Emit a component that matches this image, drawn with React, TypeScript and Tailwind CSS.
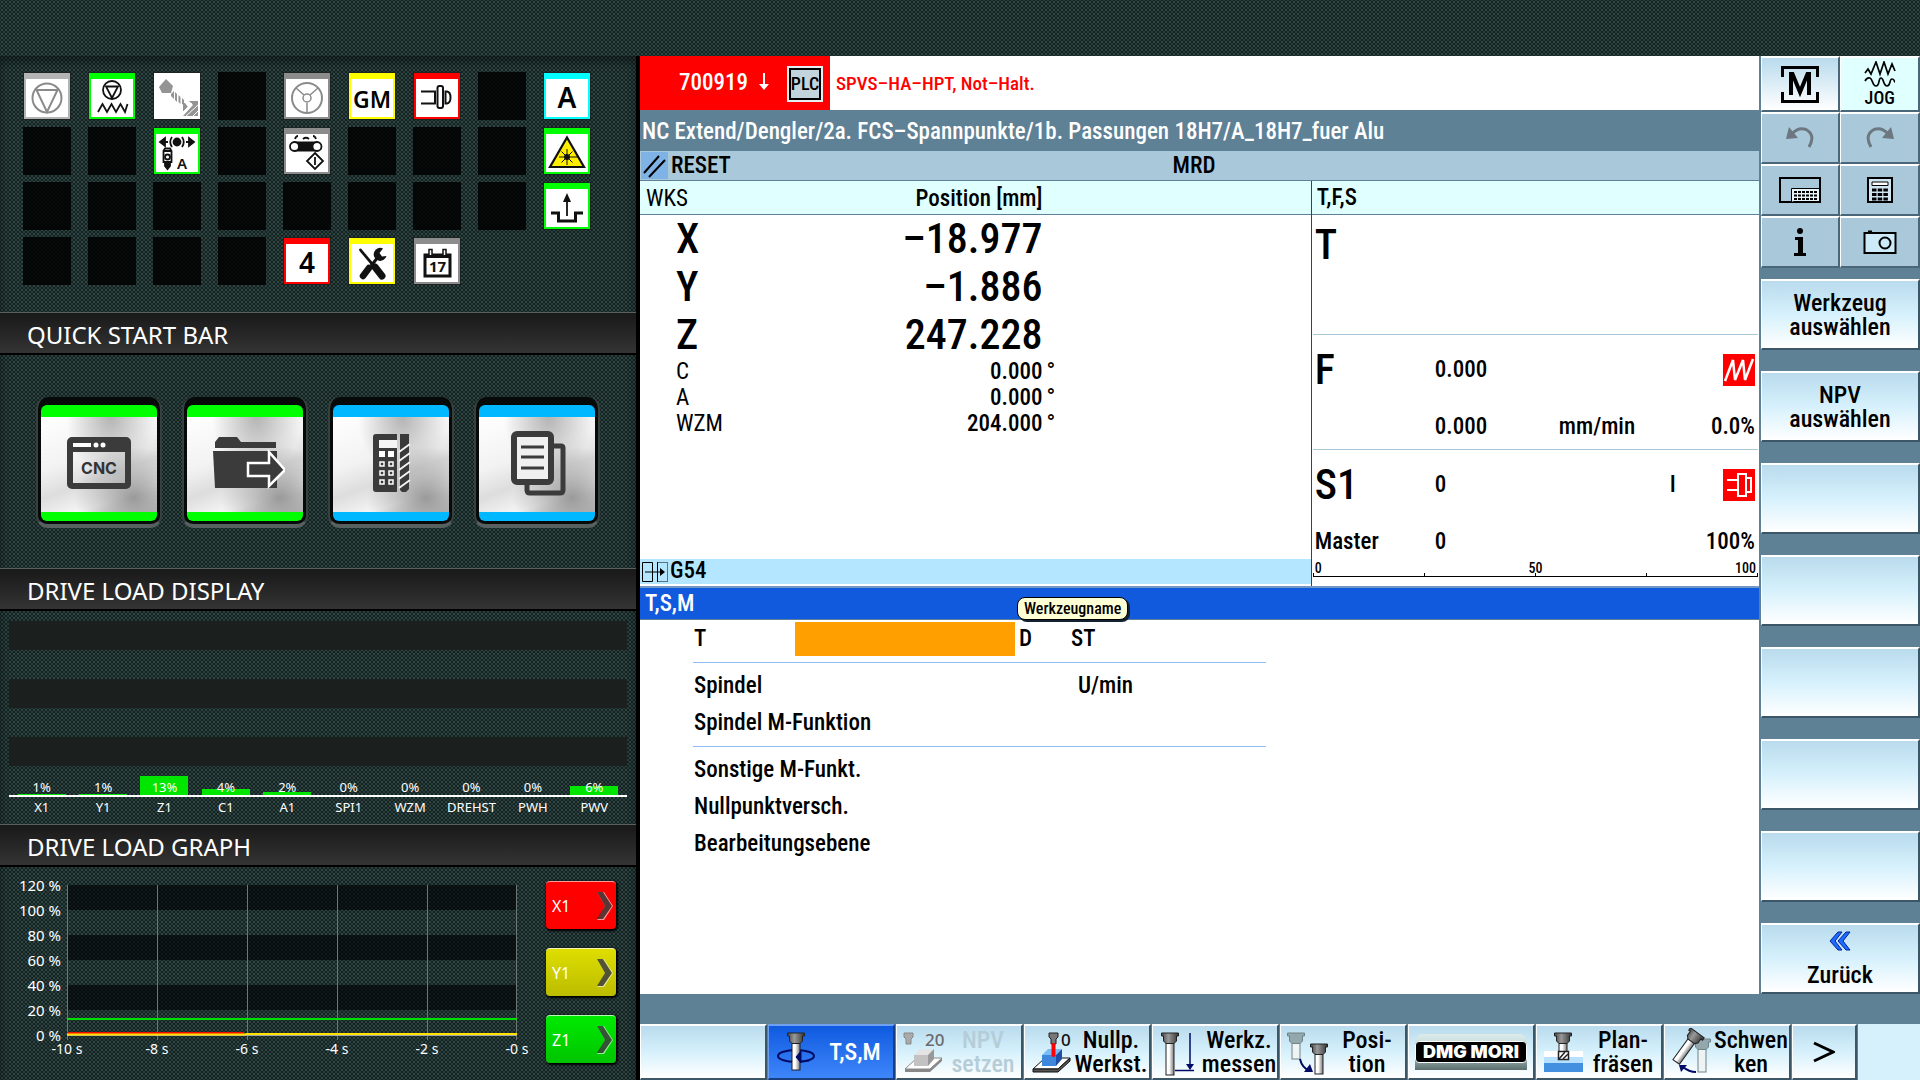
import type { ReactNode } from 'react';

const TEXTURE =
  'bg-[#142322] bg-[radial-gradient(circle,#2f4644_0_1px,transparent_1px),radial-gradient(circle,#293d3b_0_1px,transparent_1px)] bg-[size:4px_4px] bg-[position:0_0,2px_2px]';

/* ---------- status tiles ---------- */

type Frame = 'gray' | 'silver' | 'green' | 'yellow' | 'red' | 'cyan' | 'none';

const FRAMES: Record<Frame, string> = {
  gray: 'border-[#8c8c8c]',
  silver: 'border-[#b4b4b4]',
  green: 'border-[#00ff00]',
  yellow: 'border-[#ffff00]',
  red: 'border-[#ff0000]',
  cyan: 'border-[#00ffff]',
  none: 'border-white',
};

function Tile({ frame, label, children }: { frame: Frame; label: string; children: ReactNode }) {
  return (
    <button type="button" aria-label={label} className="size-12 bg-[#1c2423] p-px">
      <span className={`block size-full border-x-2 border-t-6 border-b-2 bg-white ${FRAMES[frame]}`}>
        <svg viewBox="0 0 42 38" className="size-full overflow-visible" fill="none" stroke="#111" strokeWidth="1.8">
          {children}
        </svg>
      </span>
    </button>
  );
}

function TileText({ children }: { children: string }) {
  return (
    <text x="21" y="29" textAnchor="middle" fontSize={children.length > 1 ? 23 : 28} fontWeight="600" fill="#000" stroke="none" className="font-['Noto_Sans',sans-serif]">
      {children}
    </text>
  );
}

const Blank = () => <div className="size-12 bg-black/85" />;

function StatusTiles() {
  return (
    <div className="grid grid-cols-[repeat(9,48px)] gap-x-[17px] gap-y-[7px] px-[23px] pt-4 pb-[27px]">
      <Tile frame="silver" label="Pumpe">
        <g stroke="#8a8a8a" strokeWidth="2">
          <circle cx="21" cy="19" r="14.500" />
          <path d="M10.500 11H31.500L21 33Z" />
        </g>
      </Tile>
      <Tile frame="green" label="Pumpe Vorschub">
        <circle cx="21" cy="11" r="9" />
        <path d="M15 7.500H27L21 19ZM7 33L11.500 25L16 33L20.500 25L25 33L29.500 25L34 33L36.500 25" />
      </Tile>
      <Tile frame="none" label="Späneförderung">
        <g fill="#949494" stroke="none">
          <path d="M10 0L17 7L15 14L6 14L3 8Z" />
          <path d="M15 15l3-3v8l-3-3zM19 13l2 2v8l-2-2zM22.500 16l2 2v7l-2-2zM26 19l2 2v5l-2-1z" />
          <path d="M40 22H33L37 26L27 37H42V22ZM27 24v9l5-5-3-4z" />
        </g>
        <path d="M29 38L42 26M26 34L36 24M35 39L42 32" stroke="#fff" strokeWidth="1" />
      </Tile>
      <Blank />
      <Tile frame="gray" label="Handrad">
        <g stroke="#8a8a8a" strokeWidth="2">
          <circle cx="21" cy="19" r="15" />
          <circle cx="21" cy="19" r="4" strokeWidth="1.500" />
          <path d="M18 16L10 9M24 16L32 9M21 24V34" strokeWidth="1.500" />
        </g>
      </Tile>
      <Tile frame="yellow" label="GM">
        <TileText>GM</TileText>
      </Tile>
      <Tile frame="red" label="Spindel gesperrt">
        <path d="M5 12.500H19V24.500H5" strokeWidth="2" />
        <rect x="21.500" y="7" width="5.500" height="22" rx="2" strokeWidth="2" />
        <path d="M29.500 12.500H31Q34.500 13 34.500 18.500T31 24.500H29.500Z" strokeWidth="2" />
      </Tile>
      <Blank />
      <Tile frame="cyan" label="Automatik">
        <TileText>A</TileText>
      </Tile>

      <Blank />
      <Blank />
      <Tile frame="green" label="Messtaster Automatik">
        <g fill="#111">
          <path d="M4 8L9 4V12ZM9 8H12M38 8L33 4V12ZM33 8H30" />
          <circle cx="21" cy="8" r="3.500" />
        </g>
        <path d="M16 3Q12.500 8 16 13M26 3Q29.500 8 26 13" strokeWidth="1.800" />
        <path d="M7.500 17L9 14.500H14L15.500 17V28H7.500ZM7.500 17H15.500" />
        <circle cx="11.500" cy="23" r="2.500" />
        <path d="M9 29H14V32L11.500 35L9 32Z" fill="#111" />
        <text x="26" y="35" textAnchor="middle" fontSize="15" fontWeight="600" fill="#111" stroke="none" className="font-['Noto_Sans',sans-serif]">
          A
        </text>
      </Tile>
      <Blank />
      <Tile frame="gray" label="Späneförderer Start">
        <rect x="9" y="7.500" width="22" height="10" fill="#111" stroke="none" />
        <circle cx="8.500" cy="12.500" r="4.500" fill="#fff" />
        <circle cx="31" cy="12.500" r="4.500" fill="#fff" />
        <path d="M9 5Q10 2 12 2M17 5Q20 2.500 23 5M27 2Q29 2 30 5M29 19L37 27L29 35L21 27ZM29 23V31" />
      </Tile>
      <Blank />
      <Blank />
      <Blank />
      <Tile frame="green" label="Laser">
        <path d="M21 3.500L38 33H4Z" fill="#ffee00" strokeWidth="2.200" />
        <circle cx="21" cy="23" r="3" fill="#111" stroke="none" />
        <path d="M21 15V31M13 23H32M15.500 17.500L26.500 28.500M26.500 17.500L15.500 28.500" strokeWidth="1" />
      </Tile>

      <Blank />
      <Blank />
      <Blank />
      <Blank />
      <Blank />
      <Blank />
      <Blank />
      <Blank />
      <Tile frame="green" label="Werkstück entladen">
        <path d="M21 27V10" strokeWidth="1.800" />
        <path d="M21 4L25 13H17Z" fill="#111" stroke="none" />
        <path d="M5 24H12.500V32H29.500V24H37" strokeWidth="3" />
      </Tile>

      <Blank />
      <Blank />
      <Blank />
      <Blank />
      <Tile frame="red" label="4">
        <TileText>4</TileText>
      </Tile>
      <Tile frame="yellow" label="Wartung">
        <path d="M8 5L10 4.500L23 20L21 22L8.500 7Z" fill="#111" stroke="none" />
        <path d="M24 23L31 32" strokeWidth="7" strokeLinecap="round" />
        <path d="M18 24L12 32" strokeWidth="6.500" strokeLinecap="round" />
        <path d="M20 22L27 13" strokeWidth="3" />
        <path d="M32 4.500A6.500 6.500 0 1 0 35.500 12L31 12.500L28.500 9Z" fill="#111" stroke="none" />
      </Tile>
      <Tile frame="gray" label="Kalender">
        <path d="M9 11H34V32H9Z" strokeWidth="3" />
        <path d="M8 10H35V14H8Z" fill="#111" stroke="none" />
        <path d="M13 11V5.500H16V11M27 11V5.500H30V11" fill="#fff" strokeWidth="1.500" />
        <text x="21.500" y="28" textAnchor="middle" fontSize="15" fontWeight="700" fill="#111" stroke="none" className="font-['Noto_Sans',sans-serif]">
          17
        </text>
      </Tile>
    </div>
  );
}

/* ---------- left panel ---------- */

function SectionTitle({ children }: { children: string }) {
  return (
    <h2 className="flex h-[43px] items-center border-t border-b-2 border-t-[#5a5f5f] border-b-black bg-linear-to-b from-[#191919] to-[#343434] px-[27px] pt-[3px] text-2xl text-white">
      {children}
    </h2>
  );
}

function QuickButton({ tone, label, children }: { tone: 'green' | 'blue'; label: string; children: ReactNode }) {
  const strip = tone === 'green' ? 'bg-[#00ff00]' : 'bg-[#00b8ff]';
  return (
    <button
      type="button"
      aria-label={label}
      className="rounded-xl border-x-2 border-b-4 border-x-[#35403f] border-b-[#55605f] bg-black/80 px-[3px] pt-[7px] pb-[3px]"
    >
      <span className="flex h-[116px] w-[116px] flex-col overflow-hidden rounded-md">
        <span className={`h-3 ${strip}`} />
        <span className="flex flex-1 items-center justify-center bg-[radial-gradient(ellipse_at_80%_85%,#9a9a9a_0,transparent_45%),radial-gradient(ellipse_at_60%_0%,#b4b4b4_0,transparent_45%),linear-gradient(160deg,#fff_0,#f2f2f2_40%,#ddd_60%,#f6f6f6_80%,#c4c4c4_100%)] pb-1">
          <svg viewBox="0 0 80 80" className="size-20" fill="none" stroke="#3b3b3b">
            {children}
          </svg>
        </span>
        <span className={`h-[9px] ${strip}`} />
      </span>
    </button>
  );
}

function QuickStart() {
  return (
    <div className="flex h-[213px] gap-5 px-9 pt-[42px] pb-10">
      <QuickButton tone="green" label="CNC">
        <rect x="11" y="18" width="58" height="46" rx="2" strokeWidth="6" />
        <path d="M10 16H70V30H10Z" fill="#3b3b3b" stroke="none" />
        <path d="M14 23H32" stroke="#fff" strokeWidth="4" />
        <circle cx="37" cy="23" r="2.500" fill="#fff" stroke="none" />
        <circle cx="44" cy="23" r="2.500" fill="#fff" stroke="none" />
        <text x="40" y="52" textAnchor="middle" fontSize="16" fontWeight="700" fill="#333" stroke="none" className="font-['Inter',sans-serif]">
          CNC
        </text>
      </QuickButton>
      <QuickButton tone="green" label="Programm laden">
        <g fill="#3b3b3b" stroke="none">
          <path d="M10 26V20L14 15H32L36 20H71V26Z" />
          <path d="M8 29H72V66H10Z" />
          <path d="M43 41H64V30L80 48L64 64V54H43Z" stroke="#fff" strokeWidth="2.500" />
        </g>
      </QuickButton>
      <QuickButton tone="blue" label="Technologierechner">
        <path d="M25 12H46V70H25Q22 70 22 67V15Q22 12 25 12Z" fill="#3b3b3b" stroke="none" />
        <rect x="28" y="18" width="18" height="8" fill="#f5f5f5" stroke="none" />
        <g fill="#fff" stroke="none">
          <path d="M28 29h6v6h-6zM37 29h6v6h-6z" />
        </g>
        <path d="M29 40h4v4h-4zM38 40h4v4h-4zM29 49h4v4h-4zM38 49h4v4h-4zM29 58h4v4h-4zM38 58h4v4h-4z" stroke="#fff" strokeWidth="1.500" />
        <path d="M49 12H58V67L55 70H51L49 68Z" fill="#3b3b3b" stroke="none" />
        <path d="M48 30L59 22M48 39L59 31M48 48L59 40M48 57L59 49M48 66L59 58" stroke="#f2f2f2" strokeWidth="2" />
      </QuickButton>
      <QuickButton tone="blue" label="Dokumente">
        <path d="M55 24H64Q66 24 66 26V68Q66 71 63 71H33Q30 71 30 68V60" strokeWidth="5" />
        <rect x="17" y="12" width="37" height="48" rx="3" fill="#f0f0f0" strokeWidth="6" />
        <path d="M24 25H47M24 35H47M24 46H47" strokeWidth="3" />
      </QuickButton>
    </div>
  );
}

const LOADS = [
  { axis: 'X1', value: 1 },
  { axis: 'Y1', value: 1 },
  { axis: 'Z1', value: 13 },
  { axis: 'C1', value: 4 },
  { axis: 'A1', value: 2 },
  { axis: 'SPI1', value: 0 },
  { axis: 'WZM', value: 0 },
  { axis: 'DREHST', value: 0 },
  { axis: 'PWH', value: 0 },
  { axis: 'PWV', value: 6 },
];

function DriveLoad() {
  return (
    <div className="h-[213px] px-[9px] pt-[10px] text-[13px] text-white">
      <div className="grid h-[176px] grid-cols-10 border-b-2 border-white bg-[repeating-linear-gradient(to_bottom,#1b1f1e_0_29px,transparent_29px_58px)] px-0.5">
        {LOADS.map(({ axis, value }) => (
          <div key={axis} className="grid grid-cols-1 grid-rows-1 items-end justify-items-center">
            <div className="col-start-1 row-start-1 w-12 bg-[#00e600]" style={{ height: `${value / 1.2}%` }} />
            <div className="z-10 col-start-1 row-start-1 leading-4">{value}%</div>
          </div>
        ))}
      </div>
      <div className="grid grid-cols-10 px-0.5 text-center">
        {LOADS.map(({ axis }) => (
          <div key={axis} className="leading-5">
            {axis}
          </div>
        ))}
      </div>
    </div>
  );
}

const AXIS_BUTTONS = [
  { axis: 'X1', tone: 'bg-[#ff0000] border-t-[#ff9a9a]' },
  { axis: 'Y1', tone: 'bg-linear-to-b from-[#dede00] to-[#bcbc00] border-t-[#f4f4b0]' },
  { axis: 'Z1', tone: 'bg-linear-to-b from-[#00ea00] to-[#00c400] border-t-[#b0ffb0]' },
];

function LoadGraph() {
  return (
    <div className="flex h-[213px] justify-between pr-5">
      <svg viewBox="0 0 536 213" className="h-[213px] w-[536px]" role="img" aria-label="Antriebslast">
        <g fill="#000" fillOpacity="0.62">
          <rect x="67" y="18" width="449" height="25" />
          <rect x="67" y="68" width="449" height="25" />
          <rect x="67" y="118" width="449" height="25" />
        </g>
        <g stroke="#6d7675" strokeWidth="1">
          {[67.5, 157.5, 247.5, 337.5, 427.5, 516.5].map((x) => (
            <path key={x} d={`M${x} 18V173`} />
          ))}
        </g>
        <path d="M67 168.500H517" stroke="#a0a8a8" />
        <path d="M67 152H517" stroke="#00e000" strokeWidth="2" />
        <path d="M67 166H244" stroke="#f01000" strokeWidth="2" />
        <path d="M67 167.500H244L247 167H517" stroke="#ffe000" strokeWidth="2" fill="none" />
        <g fill="#fff" fontSize="15" textAnchor="end">
          {[120, 100, 80, 60, 40, 20, 0].map((v, i) => (
            <text key={v} x="61" y={24 + i * 25}>
              {v} %
            </text>
          ))}
        </g>
        <g fill="#fff" fontSize="14" textAnchor="middle">
          {[10, 8, 6, 4, 2, 0].map((v, i) => (
            <text key={v} x={67 + i * 90} y="187">
              -{v} s
            </text>
          ))}
        </g>
      </svg>
      <div className="flex flex-col gap-[19px] pt-[14px]">
        {AXIS_BUTTONS.map(({ axis, tone }) => (
          <button key={axis} type="button" className={`flex h-12 w-[70px] items-center justify-between rounded-sm border-t pr-0.5 pl-1.5 text-base text-white shadow-[1px_1px_2px_1px_#000] ${tone}`}>
            {axis}
            <svg viewBox="0 0 18 28" className="h-7 w-[18px]">
              <path d="M1 0H8L17 14L8 28H1L9 14Z" fill="#fff" fillOpacity="0.6" />
              <path d="M1 0H7L16 14L7 27H1L9 14Z" fill="#000" fillOpacity="0.65" />
            </svg>
          </button>
        ))}
      </div>
    </div>
  );
}

/* ---------- soft keys ---------- */

const KEY =
  'border-t-2 border-l border-r-2 border-b-2 border-t-white border-l-white border-r-[#3b5666] border-b-[#3b5666] bg-linear-to-b from-[#b9dbed] via-[#d6f1fc] to-white';

function SideKey({ children }: { children?: ReactNode }) {
  return (
    <button type="button" className={`flex h-[71px] w-full flex-col items-center justify-center text-center text-2xl leading-6 font-medium ${KEY}`}>
      {children}
    </button>
  );
}

const PAD = 'flex items-center justify-center border-t-2 border-r-2 border-b-2 border-l';

function PadKey({ label, children }: { label: string; children: ReactNode }) {
  return (
    <button type="button" aria-label={label} className={`h-[52px] border-t-white border-r-[#4a6678] border-b-[#4a6678] border-l-white bg-[#a9c9db] ${PAD}`}>
      {children}
    </button>
  );
}

function SideBar() {
  return (
    <nav className="flex w-[161px] shrink-0 flex-col bg-[#5f8196] pl-0.5">
      <div className="grid grid-cols-2">
        <button type="button" aria-label="Maschine" className={`h-14 border-t-white border-r-[#4a6678] border-b-[#4a6678] border-l-white bg-linear-to-b from-[#b9dbed] to-white ${PAD}`}>
          <svg viewBox="0 0 40 40" className="size-10" fill="none" stroke="#000" strokeWidth="3">
            <path d="M2.500 13V3.500H37.500V13M2.500 28V37.500H37.500V28" />
            <path d="M11 31V10H12.500L20 28L27.500 10H29V31" strokeWidth="4" />
          </svg>
        </button>
        <button type="button" className={`h-14 flex-col border-t-white border-r-[#4a6678] border-b-[#4a6678] border-l-white bg-[#e0ffff] ${PAD}`}>
          <svg viewBox="0 0 32 26" className="h-[26px] w-8" fill="none" stroke="#000" strokeWidth="1.700">
            <path d="M1 12L4 8L7 13L12 1L16 13L20 1L24 13L28 3L31 10" />
            <path d="M1 20Q3 16 6 17C9 18 8 25 12 25S14 17 17 17S19 25 23 25S25 18 28 18S30 21 31 21" />
          </svg>
          <span className="pt-0.5 text-lg leading-[18px] font-medium">JOG</span>
        </button>
        <PadKey label="Rückgängig">
          <svg viewBox="0 0 32 24" className="h-6 w-8" fill="none" stroke="#6c7780" strokeWidth="3">
            <path d="M8 8Q14 1 22 3.500Q32 9 25 21" />
            <path d="M2 13L5 1L14 12Z" fill="#6c7780" stroke="none" />
          </svg>
        </PadKey>
        <PadKey label="Wiederholen">
          <svg viewBox="0 0 32 24" className="h-6 w-8" fill="none" stroke="#6c7780" strokeWidth="3">
            <path d="M24 8Q18 1 10 3.500Q0 9 7 21" />
            <path d="M30 13L27 1L18 12Z" fill="#6c7780" stroke="none" />
          </svg>
        </PadKey>
        <PadKey label="Tastatur">
          <svg viewBox="0 0 42 26" className="h-[26px] w-[42px]" fill="none" stroke="#000" strokeWidth="2">
            <path d="M1 1H41V25H1Z" />
            <path d="M12.500 25V11.500H41" fill="#e6f4fb" strokeWidth="1" />
            <path d="M13 12H40V24H13Z" fill="#e6f4fb" stroke="none" />
            <path d="M15 15H39M15 18.500H39M15 22H39" strokeDasharray="3 1" />
          </svg>
        </PadKey>
        <PadKey label="Taschenrechner">
          <svg viewBox="0 0 26 26" className="size-[26px]" fill="none" stroke="#000" strokeWidth="2">
            <path d="M1 1H25V25H1Z" fill="#cfe6f2" />
            <path d="M5 5H21V8.500H5Z" fill="#fff" strokeWidth="1" />
            <path d="M5 13H21M5 17.500H21M5 22H21" strokeWidth="3" strokeDasharray="4.500 1.200" />
          </svg>
        </PadKey>
        <PadKey label="Info">
          <svg viewBox="0 0 14 30" className="h-[30px] w-[14px]">
            <circle cx="7" cy="4" r="3" />
            <path d="M2 10H10V26H13V29H1V26H5V13H2Z" />
          </svg>
        </PadKey>
        <PadKey label="Bildschirmfoto">
          <svg viewBox="0 0 34 26" className="h-[26px] w-[34px]" fill="none" stroke="#000" strokeWidth="2">
            <path d="M1.500 4H32.500V24H1.500Z" fill="#cdeaf8" />
            <path d="M5 2.500H9" />
            <circle cx="22" cy="14" r="5.500" />
          </svg>
        </PadKey>
      </div>
      <div className="flex flex-col gap-[21px] pt-[11px]">
        <SideKey>
          Werkzeug
          <br />
          auswählen
        </SideKey>
        <SideKey>
          NPV
          <br />
          auswählen
        </SideKey>
        <SideKey />
        <SideKey />
        <SideKey />
        <SideKey />
        <SideKey />
        <SideKey>
          <svg viewBox="0 0 22 20" className="mb-3 h-5 w-[22px]" fill="#1c6cff" stroke="#00209a" strokeWidth="1">
            <path d="M9 1H13L6 10L13 19H9L1 10Z" />
            <path d="M17 1H21L14 10L21 19H17L9 10Z" />
          </svg>
          Zurück
        </SideKey>
      </div>
    </nav>
  );
}

function BarKey({ icon, children, state = 'normal', narrow }: { icon?: ReactNode; children?: ReactNode; state?: 'normal' | 'active' | 'disabled'; narrow?: boolean }) {
  const look =
    state === 'active'
      ? 'border-t-2 border-l border-r-2 border-b-2 border-t-[#6fa0f0] border-l-[#6fa0f0] border-r-[#1a3f80] border-b-[#1a3f80] bg-linear-to-b from-[#0d5ae0] to-[#3d86fa] text-white'
      : state === 'disabled'
        ? `text-[#b6cdd8] ${KEY}`
        : KEY;
  return (
    <button type="button" disabled={state === 'disabled'} className={`flex h-14 min-w-0 items-center text-2xl leading-6 font-medium ${narrow ? 'flex-1' : 'flex-2'} ${look}`}>
      {icon}
      <span className="flex-1 text-center">{children}</span>
    </button>
  );
}

function Icon({ children }: { children: ReactNode }) {
  return (
    <svg viewBox="0 0 44 48" className="ml-1 h-12 w-11 shrink-0" fill="none" stroke="#222" strokeWidth="1">
      {children}
    </svg>
  );
}

/* Tool holder with its shank, drawn from the top centre point (x, y). */
function Tool({ x, y, len, pale }: { x: number; y: number; len: number; pale?: boolean }) {
  return (
    <g transform={`translate(${x} ${y})`} stroke={pale ? '#6f8489' : '#222'}>
      <rect x="-4" y="10" width="8" height={len} fill={pale ? '#eef4f4' : 'url(#shank)'} />
      <path d="M-8.500 0H8.500V3H6.500V8L4 10.500H-4L-6.500 8V3H-8.500Z" fill={pale ? '#93a8ac' : 'url(#holder)'} />
    </g>
  );
}

function BottomBar() {
  return (
    <nav className="flex gap-px border-t-[30px] border-[#5f8196] bg-[#5f8196]">
      <svg className="absolute size-0" aria-hidden="true">
        <defs>
          <linearGradient id="shank">
            <stop offset="0" stopColor="#fff" />
            <stop offset="0.4" stopColor="#fff" />
            <stop offset="1" stopColor="#777" />
          </linearGradient>
          <linearGradient id="holder">
            <stop offset="0" stopColor="#444" />
            <stop offset="0.4" stopColor="#999" />
            <stop offset="1" stopColor="#333" />
          </linearGradient>
        </defs>
      </svg>
      <BarKey />
      <BarKey
        state="active"
        icon={
          <Icon>
            <ellipse cx="23" cy="28" rx="18" ry="6" stroke="#000b66" strokeWidth="2" />
            <Tool x={23} y={5} len={27} />
            <path d="M23 29L28 23V35ZM27 33L36 33" fill="#000b66" stroke="#000b66" />
          </Icon>
        }
      >
        T,S,M
      </BarKey>
      <BarKey
        state="disabled"
        icon={
          <Icon>
            <path d="M3 5H12V9L10 11V16H5V11L3 9Z" fill="#aaa" stroke="#888" />
            <path d="M4 41L16 30H41L29 41Z" fill="#fff" stroke="#888" />
            <path d="M4 41H29L41 30V33L29 44H4Z" fill="#888" stroke="none" />
            <path d="M13 27H27V38H13Z" fill="#c2c2c2" stroke="none" />
            <path d="M13 27L19 21H33L27 27Z" fill="#e4e4e4" stroke="none" />
            <path d="M27 27L33 21V31L27 38Z" fill="#999" stroke="none" />
            <text x="24" y="18" fontSize="17" fill="#6a6a6a" stroke="none" className="font-['Noto_Sans',sans-serif]">
              20
            </text>
          </Icon>
        }
      >
        NPV
        <br />
        setzen
      </BarKey>
      <BarKey
        icon={
          <Icon>
            <path d="M4 41L16 30H41L29 41Z" fill="#fff" stroke="#111" />
            <path d="M4 41H29L41 30V33L29 44H4Z" fill="#555" stroke="#111" />
            <path d="M13 27H27V38H13Z" fill="#3f86dd" stroke="none" />
            <path d="M13 27L19 21H33L27 27Z" fill="#7cbcf6" stroke="none" />
            <path d="M27 27L33 21V31L27 38Z" fill="#1d4fa8" stroke="none" />
            <path d="M20 5H29V9L27 11V16H22V11L20 9Z" fill="#777" />
            <path d="M24.500 17V27" stroke="#f00" strokeWidth="4" strokeLinecap="round" />
            <text x="32" y="18" fontSize="17" fill="#111" stroke="none" className="font-['Noto_Sans',sans-serif]">
              0
            </text>
          </Icon>
        }
      >
        Nullp.
        <br />
        Werkst.
      </BarKey>
      <BarKey
        icon={
          <Icon>
            <Tool x={13} y={5} len={32} />
            <path d="M33 5V41M18 42.500H37" stroke="#000b66" strokeWidth="1.500" />
            <path d="M33 42L29 36H37Z" fill="#000b66" stroke="none" />
          </Icon>
        }
      >
        Werkz.
        <br />
        messen
      </BarKey>
      <BarKey
        icon={
          <Icon>
            <Tool x={11} y={5} len={16} pale />
            <Tool x={34} y={16} len={20} />
            <path d="M15 31Q17 40 25 43" stroke="#000b66" strokeWidth="2" />
            <path d="M28 44L19 44L25 36Z" fill="#000b66" stroke="none" />
          </Icon>
        }
      >
        Posi-
        <br />
        tion
      </BarKey>
      <BarKey>
        <span className="mx-auto flex h-9 w-[112px] flex-col items-center justify-center rounded-t-lg bg-linear-to-b from-[#dcebeb] via-[#b9d0d0] to-[#5c6f6f] font-['Inter',sans-serif] text-[18px] leading-5 font-black">
          <span className="w-full rounded-sm border border-white bg-black whitespace-nowrap text-white">DMG MORI</span>
        </span>
      </BarKey>
      <BarKey
        icon={
          <Icon>
            <path d="M3 23H42V30H3Z" fill="#fff" stroke="none" />
            <path d="M3 29H42V35H3Z" fill="#b5e0ff" stroke="none" />
            <path d="M3 35H42V44H3Z" fill="#4490e0" stroke="none" />
            <Tool x={22} y={5} len={14} />
            <path d="M17.500 23.500H27.500V31.500H17.500Z" fill="#fff" strokeWidth="1.500" />
            <path d="M18 31L24 24M22 31L27 26" strokeWidth="1.500" />
          </Icon>
        }
      >
        Plan-
        <br />
        fräsen
      </BarKey>
      <BarKey
        icon={
          <Icon>
            <Tool x={33} y={11} len={23} pale />
            <g transform="rotate(36 26 8)">
              <Tool x={26} y={4} len={26} />
            </g>
            <path d="M27 44Q20 44 14 39" stroke="#000b66" strokeWidth="2" />
            <path d="M10 37H18L12 44Z" fill="#000b66" stroke="none" />
          </Icon>
        }
      >
        Schwen
        <br />
        ken
      </BarKey>
      <BarKey narrow>
        <svg viewBox="0 0 22 22" className="mx-auto size-[22px]" fill="none" stroke="#000" strokeWidth="3" aria-label="Weiter">
          <path d="M1 2L20 11L1 20" />
        </svg>
      </BarKey>
      <div className="flex-1 bg-[#d6f1fc]" />
    </nav>
  );
}

/* ---------- machine display ---------- */

const MAIN_AXES = [
  ['X', '–18.977'],
  ['Y', '–1.886'],
  ['Z', '247.228'],
];
const ROUND_AXES = [
  ['C', '0.000'],
  ['A', '0.000'],
  ['WZM', '204.000'],
];

const LARGE = 'text-[42px]';

function Positions() {
  return (
    <section className="flex flex-3 flex-col">
      <table className="w-full table-fixed">
        <thead>
          <tr className="h-[34px] bg-[#e0ffff] shadow-[inset_0_-1px_0_#5f8196]">
            <th scope="col" className="w-1/5 pt-0.5 pl-1.5 text-left leading-8 font-normal">
              WKS
            </th>
            <th scope="col" className="w-2/5 pt-0.5 text-right leading-8 font-medium">
              Position [mm]
            </th>
            <th aria-label="Einheit" className="p-0" />
          </tr>
        </thead>
        <tbody>
          {MAIN_AXES.map(([axis, value]) => (
            <tr key={axis} className={`h-12 leading-[48px] ${LARGE}`}>
              <th scope="row" className="pl-9 text-left font-medium">
                {axis}
              </th>
              <td className="text-right font-medium">{value}</td>
              <td />
            </tr>
          ))}
          {ROUND_AXES.map(([axis, value]) => (
            <tr key={axis} className="h-[26px] leading-[26px]">
              <th scope="row" className="pl-9 text-left font-normal">
                {axis}
              </th>
              <td className="text-right">{value}</td>
              <td className="pl-1">°</td>
            </tr>
          ))}
        </tbody>
      </table>
      <div className="mt-auto mb-0.5 flex h-[25px] items-center gap-0.5 bg-[#b5e6ff] pl-0.5">
        <svg viewBox="0 0 26 20" className="h-5 w-[26px]" fill="none" stroke="#000">
          <path d="M0.500 0.500H10.500V19.500H0.500ZM15.500 0V20M3 10H22" />
          <path d="M15.500 0.500H25.500V19.500H15.500" strokeDasharray="1 1" />
          <path d="M23 10L18 6V14Z" fill="#000" stroke="none" />
        </svg>
        G54
      </div>
    </section>
  );
}

function FeedSpindle() {
  return (
    <section className="flex flex-2 flex-col border-l border-[#2e4656]">
      <h3 className="flex h-[34px] items-center border-b border-[#5f8196] bg-[#e0ffff] pt-0.5 pl-[5px]">T,F,S</h3>
      <div className={`mx-px h-[120px] border-b border-[#a9c9db] pt-1.5 pl-0.5 leading-[48px] ${LARGE}`}>T</div>
      <div className="mx-px grid h-[115px] grid-cols-[120px_124px_1fr_auto] grid-rows-[32px_30px] content-start items-center gap-y-[26px] border-b border-[#a9c9db] pt-[19px] pr-[3px] pl-0.5">
        <span className={`leading-8 ${LARGE}`}>F</span>
        <span className="col-span-2">0.000</span>
        <svg viewBox="0 0 32 32" className="size-8 justify-self-end bg-[#ff0000]" fill="none" stroke="#fff" strokeWidth="2.500" role="img" aria-label="Vorschub gesperrt">
          <path d="M2 27L10 6L12 26L20 6L22 26L30 5" />
        </svg>
        <span className="col-start-2">0.000</span>
        <span>mm/min</span>
        <span>0.0%</span>
      </div>
      <div className="mx-px grid grid-cols-[120px_235px_1fr_auto] grid-rows-[32px_30px] items-center gap-y-[26px] pt-[19px] pr-[3px] pl-0.5">
        <span className={`leading-8 ${LARGE}`}>S1</span>
        <span>0</span>
        <span>I</span>
        <svg viewBox="0 0 32 32" className="size-8 justify-self-end bg-[#ff0000]" fill="none" stroke="#fff" strokeWidth="2" role="img" aria-label="Spindel gesperrt">
          <path d="M4 11H15M4 21H15M15 5H23V27H15ZM24 9H28V23H24" />
        </svg>
        <span>Master</span>
        <span className="col-span-2">0</span>
        <span>100%</span>
      </div>
      <div className="mx-px mt-1 mb-[9px] border-b border-black text-[14px] leading-[14px]">
        <div className="grid grid-cols-3 px-0.5">
          <span>0</span>
          <span className="text-center">50</span>
          <span className="text-right">100</span>
        </div>
        <div className="-mt-0.5 flex justify-between" aria-hidden="true">
          {[0, 25, 50, 75, 100].map((tick) => (
            <i key={tick} className="h-[3px] w-px bg-black" />
          ))}
        </div>
      </div>
    </section>
  );
}

function FormRow({ id, label, unit }: { id: string; label: string; unit?: string }) {
  return (
    <div className="flex h-[37px] items-center">
      <label htmlFor={id} className="w-[220px] pl-px">
        {label}
      </label>
      <input id={id} className="w-[165px] bg-transparent" />
      {unit}
    </div>
  );
}

function ToolForm() {
  return (
    <section className="flex-1">
      <h3 className="relative flex h-[34px] items-center border-t-2 border-b border-t-[#7397c8] border-b-[#5f8196] bg-[#1159dd] pt-px pl-[5px] text-white">
        T,S,M
        <span
          role="tooltip"
          className="absolute top-[9px] left-[377px] rounded-lg border border-black bg-[#ffffd5] px-1.5 text-base leading-[21px] font-medium text-black shadow-[2px_2px_0_#123]"
        >
          Werkzeugname
        </span>
      </h3>
      <form className="ml-[53px] w-[573px]">
        <div className="flex items-start border-b border-[#8fbcf5] pt-0.5 pb-1.5 leading-[34px]">
          <label htmlFor="tool" className="w-[102px] pl-px">
            T
          </label>
          <input id="tool" className="h-[34px] w-[220px] bg-[#ffa000]" />
          <span className="w-14 pl-1">D</span>
          <span>ST</span>
        </div>
        <div className="border-b border-[#8fbcf5] pt-[5px] pb-1">
          <FormRow id="spindle" label="Spindel" unit="U/min" />
          <FormRow id="spindle-m" label="Spindel M-Funktion" />
        </div>
        <div className="pt-[5px]">
          <FormRow id="other-m" label="Sonstige M-Funkt." />
          <FormRow id="offset" label="Nullpunktversch." />
          <FormRow id="plane" label="Bearbeitungsebene" />
        </div>
      </form>
    </section>
  );
}

function Display() {
  return (
    <div className="flex min-w-0 flex-1 flex-col bg-white">
      <div className="flex h-[54px] items-center">
        <div className="flex h-full w-[190px] items-center bg-[#ff0000] pt-px pr-[9px] pl-[39px] text-white">
          700919
          <svg viewBox="0 0 12 18" className="mb-1 ml-2.5 h-[18px] w-3" fill="#fff">
            <path d="M5 0H7V11H11L6 17L1 11H5Z" />
          </svg>
          <span className="ml-auto flex h-8 w-8 items-center justify-center border-2 border-black bg-[#c3d5dc] text-[18px] font-medium text-black outline-2 outline-[#e6eef2]">PLC</span>
        </div>
        <p className="pt-0.5 pl-1.5 text-[19px] text-[#ff0000]">SPVS–HA–HPT, Not–Halt.</p>
      </div>
      <div className="flex h-[41px] items-center bg-[#5f8196] pt-[3px] pl-0.5 text-white">NC Extend/Dengler/2a. FCS–Spannpunkte/1b. Passungen 18H7/A_18H7_fuer Alu</div>
      <div className="flex h-[30px] items-center border-b border-[#5f8196] bg-[#a9c9db] pl-px">
        <div className="flex flex-58 items-center gap-[3px]">
          <svg viewBox="0 0 27 27" className="size-[27px] bg-[#7fb2e5]" fill="none" stroke="#000" strokeWidth="2">
            <path d="M3 21L18 4M8 25L24 8" />
          </svg>
          <span className="pt-0.5">RESET</span>
        </div>
        <span className="flex-64 pt-0.5">MRD</span>
      </div>
      <div className="flex">
        <Positions />
        <FeedSpindle />
      </div>
      <ToolForm />
    </div>
  );
}

export default function App() {
  return (
    <div className={`flex min-h-screen flex-col font-['Noto_Sans',sans-serif] ${TEXTURE}`}>
      <header className="h-14" />
      <div className="flex flex-1">
        <aside className="w-1/3 border-r-4 border-black shadow-[inset_0_6px_8px_#0006]">
          <StatusTiles />
          <SectionTitle>QUICK START BAR</SectionTitle>
          <QuickStart />
          <SectionTitle>DRIVE LOAD DISPLAY</SectionTitle>
          <DriveLoad />
          <SectionTitle>DRIVE LOAD GRAPH</SectionTitle>
          <LoadGraph />
        </aside>
        <main className="flex w-2/3 flex-col font-['Roboto_Condensed','Liberation_Sans',sans-serif] text-[23px] font-medium text-black">
          <div className="flex flex-1">
            <Display />
            <SideBar />
          </div>
          <BottomBar />
        </main>
      </div>
    </div>
  );
}
